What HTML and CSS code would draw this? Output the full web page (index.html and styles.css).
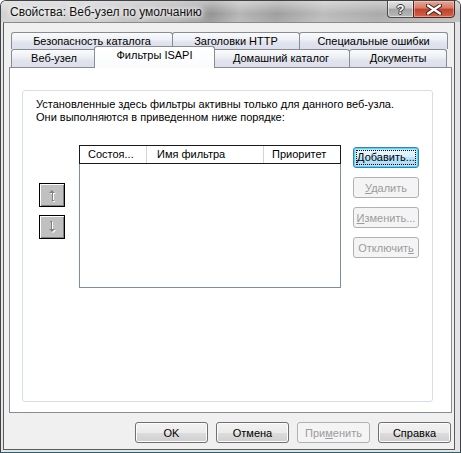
FILE: index.html
```html
<!DOCTYPE html>
<html lang="ru">
<head>
    <meta charset="UTF-8">
    <title>Свойства: Веб-узел по умолчанию</title>
    <link rel="stylesheet" href="styles.css">
</head>
<body>
    <div class="window">
        <!-- заголовок окна -->
        <div class="titlebar">
            <span class="title">Свойства: Веб-узел по умолчанию</span>
            <div class="caption-btns">
                <span class="cap-btn cap-help">?</span>
                <span class="cap-btn cap-close">
                    <svg width="16" height="11" viewBox="0 0 16 11">
                        <path d="M2 1.5 L14 9.5 M14 1.5 L2 9.5" stroke="#3a1a14" stroke-width="4.2" stroke-linecap="round"/>
                        <path d="M2 1.5 L14 9.5 M14 1.5 L2 9.5" stroke="#fff" stroke-width="2.4" stroke-linecap="round"/>
                    </svg>
                </span>
            </div>
        </div>

        <div class="client">
            <!-- вкладки -->
            <div class="tabs">
                <div class="tab-row tab-row-back">
                    <div class="tab t-security">Безопасность каталога</div>
                    <div class="tab t-headers">Заголовки HTTP</div>
                    <div class="tab t-errors">Специальные ошибки</div>
                </div>
                <div class="tab-row tab-row-front">
                    <div class="tab t-site">Веб-узел</div>
                    <div class="tab t-isapi selected">Фильтры ISAPI</div>
                    <div class="tab t-home">Домашний каталог</div>
                    <div class="tab t-docs">Документы</div>
                </div>
            </div>

            <div class="panel">
                <div class="group">
                    <p class="info">Установленные здесь фильтры активны только для данного веб-узла.<br>Они выполняются в приведенном ниже порядке:</p>

                    <div class="filters">
                        <div class="order-btns">
                            <button class="classic-btn">
                                <svg width="9" height="13" viewBox="0 0 9 13">
                                    <path d="M4 1 L7 4 H5 V11 H6 V12 H4 V4 H1 Z" fill="#fff" transform="translate(1 1)"/>
                                    <path d="M4 1 L7 4 H5 V11 H6 V12 H4 V4 H1 Z" fill="#808080"/>
                                </svg>
                            </button>
                            <button class="classic-btn">
                                <svg width="9" height="13" viewBox="0 0 9 13">
                                    <path d="M2 0 H4 V8 H7 L4 11 L1 8 H3 V1 H2 Z" fill="#fff" transform="translate(1 1)"/>
                                    <path d="M2 0 H4 V8 H7 L4 11 L1 8 H3 V1 H2 Z" fill="#808080"/>
                                </svg>
                            </button>
                        </div>

                        <div class="listview">
                            <div class="lv-header">
                                <span class="lv-col col-state">Состоя...</span>
                                <span class="lv-col col-name">Имя фильтра</span>
                                <span class="lv-col col-prio">Приоритет</span>
                            </div>
                        </div>

                        <div class="side-btns">
                            <button class="btn btn-default"><span class="focus"><u>Д</u>обавить...</span></button>
                            <button class="btn" disabled><u>У</u>далить</button>
                            <button class="btn" disabled><u>И</u>зменить...</button>
                            <button class="btn" disabled>Отключит<u>ь</u></button>
                        </div>
                    </div>
                </div>
            </div>

            <!-- кнопки диалога -->
            <div class="dialog-btns">
                <button class="btn btn-wide">OK</button>
                <button class="btn btn-wide">Отмена</button>
                <button class="btn btn-wide" disabled>При<u>м</u>енить</button>
                <button class="btn btn-wide">Справка</button>
            </div>
        </div>
    </div>
</body>
</html>
```

FILE: styles.css
```css
/* общий вид */
html, body {
    margin: 0;
    padding: 0;
    background: #ffffff;
}

body {
    font-family: "Liberation Sans", Arial, sans-serif;
    font-size: 11px;
    color: #000;
}

/* окно */
.window {
    width: 461px;
    height: 453px;
    box-sizing: border-box;
    border: 1px solid #404448;
    border-bottom-color: #2f5f6a;
    border-radius: 6px 6px 0 0;
    background: #e4e4e4;
    display: flex;
    flex-direction: column;
    overflow: hidden;
}

.titlebar {
    height: 21px;
    flex: none;
    display: flex;
    align-items: flex-start;
    background:
        linear-gradient(to bottom, rgba(255, 255, 255, 0.45), rgba(255, 255, 255, 0.05) 60%, rgba(255, 255, 255, 0.15)),
        linear-gradient(100deg, #cfcfcf 0%, #c6c6c6 22%, #a9a9a9 38%, #8f8f8f 46%, #b2b2b2 52%, #9a9a9a 60%, #b8b8b8 70%, #a6a6a6 82%, #bcbcbc 100%);
}

.title {
    margin: 4px 0 0 9px;
    font-size: 12px;
    line-height: 15px;
    color: #101010;
    text-shadow: 0 0 4px #fff, 0 0 6px #fff, 0 0 8px #fff;
}

.caption-btns {
    margin-left: auto;
    margin-right: 5px;
    margin-top: -1px;
    display: flex;
}

.cap-btn {
    height: 18px;
    box-sizing: border-box;
    display: flex;
    align-items: center;
    justify-content: center;
    border: 1px solid #4a4a4a;
}

.cap-help {
    width: 26px;
    border-radius: 0 0 0 4px;
    border-right: none;
    background: linear-gradient(#e4e4e4, #c8c8c8 45%, #a4a4a4 50%, #b8b8b8);
    box-shadow: inset 0 0 0 1px rgba(255, 255, 255, 0.5);
    color: #fff;
    font-weight: bold;
    font-size: 13px;
    text-shadow: -1px 0 #333, 1px 0 #333, 0 -1px #333, 0 1px #333;
}

.cap-close {
    width: 42px;
    border-radius: 0 0 4px 0;
    border-color: #4a2620;
    background: linear-gradient(#e8a796, #d47a66 45%, #c2402a 50%, #d2624a);
    box-shadow: inset 0 0 0 1px rgba(255, 220, 210, 0.45);
}

/* рабочая область */
.client {
    flex: 1;
    margin: 0 5px 2px 2px;
    border: 1px solid #5c5c5c;
    border-top-color: #8a8a8a;
    background: #f0f0f0;
    padding: 9px 2px 0 5px;
    display: flex;
    flex-direction: column;
}

/* вкладки */
.tabs {
    margin: 0 3px 0 2px;
    display: flex;
    flex-direction: column;
}

.tab-row {
    display: flex;
}

.tab {
    box-sizing: border-box;
    border: 1px solid #898c95;
    border-radius: 3px 3px 0 0;
    margin-right: -1px;
    background: linear-gradient(#fbfbfb, #eef0f5 40%, #e1e4ee 60%, #dcdfea);
    text-align: center;
    white-space: nowrap;
}

.tab:last-child {
    margin-right: 0;
}

.tab-row-back .tab {
    height: 17px;
    line-height: 16px;
    border-bottom: none;
}

.tab-row-front .tab {
    height: 18px;
    line-height: 17px;
    border-bottom: none;
}

.tab-row-front .tab.selected {
    height: 22px;
    margin: -3px -3px -1px -2px;
    line-height: 16px;
    background: linear-gradient(#ffffff, #fafbfd);
    position: relative;
    z-index: 1;
}

.t-security { width: 162px; }
.t-headers  { width: 128px; }
.t-errors   { width: 149px; }
.t-site     { width: 86px; }
.t-isapi    { width: 121px; }
.t-home     { width: 138px; }
.t-docs     { width: 98px; }

/* панель вкладки */
.panel {
    height: 346px;
    box-sizing: border-box;
    border: 1px solid #898c95;
    background: #ffffff;
    display: flex;
}

.group {
    flex: 1;
    margin: 22px 20px 10px 12px;
    border: 1px solid #d5dfe5;
    border-radius: 3px;
    padding: 7px 13px 0;
}

.info {
    margin: 0;
    line-height: 13px;
}

.filters {
    display: flex;
    margin-top: 21px;
}

.order-btns {
    width: 26px;
    margin: 38px 0 0 3px;
    display: flex;
    flex-direction: column;
    gap: 8px;
}

.classic-btn {
    width: 26px;
    height: 24px;
    padding: 0;
    border: 1px solid #000;
    background: #c0c0c0;
    box-shadow: inset 1px 1px #fff, inset -1px -1px #808080;
    display: flex;
    align-items: center;
    justify-content: center;
}

.listview {
    width: 262px;
    height: 143px;
    box-sizing: border-box;
    margin-left: 14px;
    border: 1px solid #7a8fa3;
    border-top: none;
    background: #fff;
}

.lv-header {
    height: 19px;
    box-sizing: border-box;
    margin: 0 -1px;
    border: 1px solid #1a1a1a;
    display: flex;
    align-items: center;
}

.lv-col {
    box-sizing: border-box;
    height: 100%;
    line-height: 16px;
    padding-left: 8px;
    border-right: 1px solid #d5d5d5;
}

.col-state { width: 67px; }
.col-name  { width: 117px; padding-left: 10px; }
.col-prio  { flex: 1; border-right: none; }

/* кнопки */
.btn {
    height: 21px;
    box-sizing: border-box;
    padding: 0;
    font-family: "Liberation Sans", Arial, sans-serif;
    font-size: 11px;
    color: #000;
    border: 1px solid #707070;
    border-radius: 3px;
    background: linear-gradient(#f2f2f2, #ebebeb 50%, #dddddd 50%, #cfcfcf);
    box-shadow: inset 0 0 0 1px #fcfcfc;
}

.btn u {
    text-decoration: underline;
    text-underline-offset: 1px;
}

.btn:disabled {
    color: #9c9c9c;
    border-color: #adb2b5;
    background: #f4f4f4;
    box-shadow: none;
}

.btn-default {
    border-color: #3c7fb1;
    box-shadow: inset 0 0 0 1px #48d8fb, inset 0 0 0 2px #b8e6fa;
    background: linear-gradient(#eaf6fd, #d9f0fc 50%, #bee6fd 50%, #a7d9f5);
    padding: 2px;
}

.btn-default .focus {
    display: block;
    height: 100%;
    box-sizing: border-box;
    line-height: 13px;
    border: 1px dotted #000;
}

.side-btns {
    width: 66px;
    margin: 2px 0 0 12px;
    display: flex;
    flex-direction: column;
    gap: 9px;
}

.side-btns .btn {
    width: 66px;
}

.dialog-btns {
    display: flex;
    justify-content: flex-end;
    gap: 8px;
    margin-top: 9px;
    padding-right: 1px;
}

.btn-wide {
    width: 73px;
}
```
